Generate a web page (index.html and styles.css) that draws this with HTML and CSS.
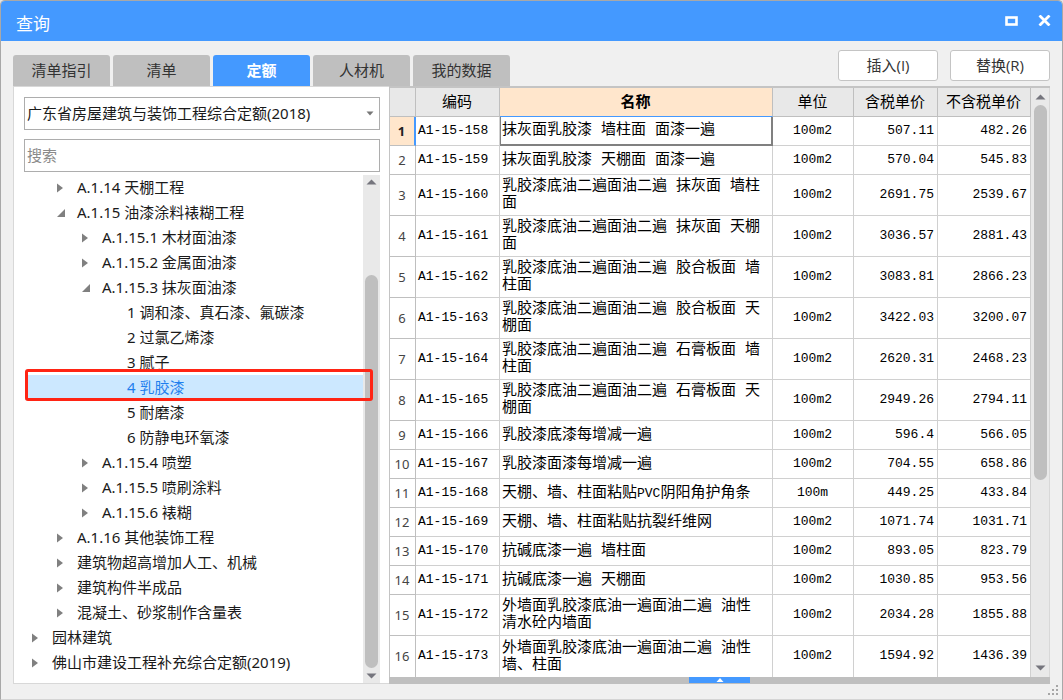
FILE: index.html
```html
<!DOCTYPE html>
<html lang="zh-CN">
<head>
<meta charset="utf-8">
<meta name="viewport" content="width=device-width, initial-scale=1">
<title>查询</title>
<link rel="stylesheet" href="styles.css">
</head>
<body>
<div class="window">
  <header class="titlebar">
    <h1 class="title">查询</h1>
    <div class="win-buttons">
      <button class="win-btn" type="button" aria-label="最大化"><svg width="13" height="10" viewBox="0 0 13 10"><rect x="1.5" y="1.5" width="10" height="7" fill="none" stroke="#fff" stroke-width="2.6"/></svg></button>
      <button class="win-btn" type="button" aria-label="关闭"><svg width="13" height="11" viewBox="0 0 13 11"><path d="M1.5 0.5L11.5 10.5M11.5 0.5L1.5 10.5" stroke="#fff" stroke-width="2.8"/></svg></button>
    </div>
  </header>

  <div class="toolbar">
    <nav class="tabs">
      <button class="tab" type="button">清单指引</button>
      <button class="tab" type="button">清单</button>
      <button class="tab tab-active" type="button">定额</button>
      <button class="tab" type="button">人材机</button>
      <button class="tab" type="button">我的数据</button>
    </nav>
    <div class="actions">
      <button class="action" type="button">插入(I)</button>
      <button class="action" type="button">替换(R)</button>
    </div>
  </div>

  <main class="content">
    <section class="side">
      <div class="combo">
        <select class="field" aria-label="定额库"><option>广东省房屋建筑与装饰工程综合定额(2018)</option></select>
        <svg class="combo-arrow" width="8" height="5" viewBox="0 0 8 5"><path d="M0.5 0.5h7L4 4.5z" fill="#777"/></svg>
      </div>
      <input class="field search" type="text" placeholder="搜索" aria-label="搜索">
      <div class="tree-wrap">
        <ul class="tree">
          <li class="node level-2"><svg class="arrow" viewBox="0 0 10 10"><path d="M2 0.5v9L8 5z"/></svg><button type="button">A.1.14 天棚工程</button></li>
          <li class="node level-2"><svg class="arrow" viewBox="0 0 10 10"><path d="M10 1v8H2z"/></svg><button type="button">A.1.15 油漆涂料裱糊工程</button></li>
          <li class="node level-3"><svg class="arrow" viewBox="0 0 10 10"><path d="M2 0.5v9L8 5z"/></svg><button type="button">A.1.15.1 木材面油漆</button></li>
          <li class="node level-3"><svg class="arrow" viewBox="0 0 10 10"><path d="M2 0.5v9L8 5z"/></svg><button type="button">A.1.15.2 金属面油漆</button></li>
          <li class="node level-3"><svg class="arrow" viewBox="0 0 10 10"><path d="M10 1v8H2z"/></svg><button type="button">A.1.15.3 抹灰面油漆</button></li>
          <li class="node level-4"><button type="button">1 调和漆、真石漆、氟碳漆</button></li>
          <li class="node level-4"><button type="button">2 过氯乙烯漆</button></li>
          <li class="node level-4"><button type="button">3 腻子</button></li>
          <li class="node level-4 selected"><button type="button">4 乳胶漆</button><span class="highlight"></span></li>
          <li class="node level-4"><button type="button">5 耐磨漆</button></li>
          <li class="node level-4"><button type="button">6 防静电环氧漆</button></li>
          <li class="node level-3"><svg class="arrow" viewBox="0 0 10 10"><path d="M2 0.5v9L8 5z"/></svg><button type="button">A.1.15.4 喷塑</button></li>
          <li class="node level-3"><svg class="arrow" viewBox="0 0 10 10"><path d="M2 0.5v9L8 5z"/></svg><button type="button">A.1.15.5 喷刷涂料</button></li>
          <li class="node level-3"><svg class="arrow" viewBox="0 0 10 10"><path d="M2 0.5v9L8 5z"/></svg><button type="button">A.1.15.6 裱糊</button></li>
          <li class="node level-2"><svg class="arrow" viewBox="0 0 10 10"><path d="M2 0.5v9L8 5z"/></svg><button type="button">A.1.16 其他装饰工程</button></li>
          <li class="node level-2"><svg class="arrow" viewBox="0 0 10 10"><path d="M2 0.5v9L8 5z"/></svg><button type="button">建筑物超高增加人工、机械</button></li>
          <li class="node level-2"><svg class="arrow" viewBox="0 0 10 10"><path d="M2 0.5v9L8 5z"/></svg><button type="button">建筑构件半成品</button></li>
          <li class="node level-2"><svg class="arrow" viewBox="0 0 10 10"><path d="M2 0.5v9L8 5z"/></svg><button type="button">混凝土、砂浆制作含量表</button></li>
          <li class="node level-1"><svg class="arrow" viewBox="0 0 10 10"><path d="M2 0.5v9L8 5z"/></svg><button type="button">园林建筑</button></li>
          <li class="node level-1"><svg class="arrow" viewBox="0 0 10 10"><path d="M2 0.5v9L8 5z"/></svg><button type="button">佛山市建设工程补充综合定额(2019)</button></li>
        </ul>
        <div class="scrollbar tree-scroll">
          <svg width="11" height="6" viewBox="0 0 11 6"><path d="M0.5 5.5h10L5.5 0.5z" fill="#75757d"/></svg>
          <div class="track"><div class="thumb"></div></div>
          <svg width="11" height="6" viewBox="0 0 11 6"><path d="M0.5 0.5h10L5.5 5.5z" fill="#75757d"/></svg>
        </div>
      </div>
    </section>

    <section class="grid-panel">
      <div class="grid-wrap">
        <div class="grid-view">
          <table class="grid">
            <colgroup><col class="c-num"><col class="c-code"><col class="c-name"><col class="c-unit"><col class="c-price"><col class="c-net"></colgroup>
            <thead>
              <tr><th></th><th>编码</th><th class="current">名称</th><th>单位</th><th>含税单价</th><th>不含税单价</th></tr>
            </thead>
            <tbody>
              <tr class="active"><td>1</td><td>A1-15-158</td><td>抹灰面乳胶漆 墙柱面 面漆一遍</td><td>100m2</td><td>507.11</td><td>482.26</td></tr>
              <tr><td>2</td><td>A1-15-159</td><td>抹灰面乳胶漆 天棚面 面漆一遍</td><td>100m2</td><td>570.04</td><td>545.83</td></tr>
              <tr class="tall"><td>3</td><td>A1-15-160</td><td>乳胶漆底油二遍面油二遍 抹灰面 墙柱<br>面</td><td>100m2</td><td>2691.75</td><td>2539.67</td></tr>
              <tr class="tall"><td>4</td><td>A1-15-161</td><td>乳胶漆底油二遍面油二遍 抹灰面 天棚<br>面</td><td>100m2</td><td>3036.57</td><td>2881.43</td></tr>
              <tr class="tall"><td>5</td><td>A1-15-162</td><td>乳胶漆底油二遍面油二遍 胶合板面 墙<br>柱面</td><td>100m2</td><td>3083.81</td><td>2866.23</td></tr>
              <tr class="tall"><td>6</td><td>A1-15-163</td><td>乳胶漆底油二遍面油二遍 胶合板面 天<br>棚面</td><td>100m2</td><td>3422.03</td><td>3200.07</td></tr>
              <tr class="tall"><td>7</td><td>A1-15-164</td><td>乳胶漆底油二遍面油二遍 石膏板面 墙<br>柱面</td><td>100m2</td><td>2620.31</td><td>2468.23</td></tr>
              <tr class="tall"><td>8</td><td>A1-15-165</td><td>乳胶漆底油二遍面油二遍 石膏板面 天<br>棚面</td><td>100m2</td><td>2949.26</td><td>2794.11</td></tr>
              <tr><td>9</td><td>A1-15-166</td><td>乳胶漆底漆每增减一遍</td><td>100m2</td><td>596.4</td><td>566.05</td></tr>
              <tr><td>10</td><td>A1-15-167</td><td>乳胶漆面漆每增减一遍</td><td>100m2</td><td>704.55</td><td>658.86</td></tr>
              <tr><td>11</td><td>A1-15-168</td><td>天棚、墙、柱面粘贴<span class="latin">PVC</span>阴阳角护角条</td><td>100m</td><td>449.25</td><td>433.84</td></tr>
              <tr><td>12</td><td>A1-15-169</td><td>天棚、墙、柱面粘贴抗裂纤维网</td><td>100m2</td><td>1071.74</td><td>1031.71</td></tr>
              <tr><td>13</td><td>A1-15-170</td><td>抗碱底漆一遍 墙柱面</td><td>100m2</td><td>893.05</td><td>823.79</td></tr>
              <tr><td>14</td><td>A1-15-171</td><td>抗碱底漆一遍 天棚面</td><td>100m2</td><td>1030.85</td><td>953.56</td></tr>
              <tr class="tall"><td>15</td><td>A1-15-172</td><td>外墙面乳胶漆底油一遍面油二遍 油性<br>清水砼内墙面</td><td>100m2</td><td>2034.28</td><td>1855.88</td></tr>
              <tr class="tall"><td>16</td><td>A1-15-173</td><td>外墙面乳胶漆底油一遍面油二遍 油性<br>墙、柱面</td><td>100m2</td><td>1594.92</td><td>1436.39</td></tr>
            </tbody>
          </table>
        </div>
        <div class="scrollbar grid-scroll">
          <svg width="11" height="6" viewBox="0 0 11 6"><path d="M0.5 5.5h10L5.5 0.5z" fill="#75757d"/></svg>
          <div class="track"><div class="thumb"></div></div>
          <svg width="11" height="6" viewBox="0 0 11 6"><path d="M0.5 0.5h10L5.5 5.5z" fill="#75757d"/></svg>
        </div>
      </div>
      <div class="splitter">
        <button class="expand" type="button" aria-label="展开"><svg width="8" height="4" viewBox="0 0 8 4"><path d="M0.5 4h7L4 0z" fill="#fff"/></svg></button>
      </div>
    </section>
  </main>

  <footer class="foot">
    <svg width="11" height="11" viewBox="0 0 11 11" fill="#a6a6a6"><path d="M8 0h2v2H8zM4 4h2v2H4zM8 4h2v2H8zM0 8h2v2H0zM4 8h2v2H4zM8 8h2v2H8z"/></svg>
  </footer>
</div>
</body>
</html>
```
FILE: styles.css
```css
* {
  box-sizing: border-box;
}

body {
  margin: 0;
  background: #e4e4e4;
  color: #1a1a1a;
  font-family: "Noto Sans", "Noto Sans CJK SC", sans-serif;
  font-size: 15px;
  line-height: 20px;
}

button,
input,
select {
  font: inherit;
  color: inherit;
}

button {
  padding: 0;
  border: 0;
  background: none;
}

svg {
  display: block;
  flex: none;
}

.window {
  display: flex;
  flex-direction: column;
  min-height: 100vh;
  border: 1px solid #a8a8a8;
  border-bottom-color: #d4d4d4;
  border-radius: 5px 5px 0 0;
  background: #f0f0f0;
}

.titlebar {
  display: flex;
  align-items: center;
  justify-content: space-between;
  height: 40px;
  padding: 6px 11px 0 15px;
  border-radius: 4px 4px 0 0;
  background: #4499ff;
  color: #fff;
}

.title {
  margin: 0;
  font-size: 17px;
  font-weight: 400;
}

.win-buttons {
  display: flex;
  align-items: center;
  gap: 20px;
  padding-bottom: 7px;
}

.toolbar {
  display: flex;
  justify-content: space-between;
  padding: 9px 12px 0;
}

.tabs {
  display: flex;
  gap: 3px;
  padding-top: 5px;
}

.tab {
  width: 97px;
  height: 31px;
  padding-bottom: 2px;
  border-radius: 3px 3px 0 0;
  background: #bfbfbf;
  color: #333;
}

.tab-active {
  background: #4499ff;
  color: #fff;
  font-weight: 700;
}

.actions {
  display: flex;
  gap: 12px;
}

.action {
  width: 100px;
  height: 31px;
  padding-bottom: 2px;
  border: 1px solid #c4c4c4;
  border-radius: 3px;
  background: #fff;
  color: #333;
  font-family: "Open Sans", "Noto Sans CJK SC", sans-serif;
}

.content {
  display: flex;
  flex: 1;
  margin: 0 12px;
}

.side {
  display: flex;
  flex-direction: column;
  flex: none;
  width: 376px;
  padding: 10px 9px 0 10px;
  border: 1px solid #d8d8d8;
  border-right: 0;
  background: #fff;
}

.combo {
  position: relative;
  margin-bottom: 9px;
}

.field {
  display: block;
  width: 100%;
  height: 33px;
  padding: 0 2px 1px;
  border: 1px solid #adadad;
  border-radius: 0;
  outline: 0;
  background: #fff;
  appearance: none;
}

.combo-arrow {
  position: absolute;
  top: 14px;
  right: 6px;
}

.search {
  padding-bottom: 2px;
}

.search::placeholder {
  color: #8a8a8a;
  opacity: 1;
}

.tree-wrap {
  display: flex;
  flex: 1;
  margin-top: 3px;
}

.tree {
  flex: 1;
  margin: 0;
  padding: 0 0 0 1px;
  list-style: none;
}

.node {
  display: flex;
  align-items: center;
  gap: 12px;
  height: 25px;
}

.node button {
  padding-bottom: 2px;
  text-align: left;
}

.arrow {
  width: 10px;
  height: 10px;
  fill: #808080;
}

.level-1 { padding-left: 5px; }
.level-2 { padding-left: 30px; }
.level-3 { padding-left: 55px; }
.level-4 { padding-left: 102px; }

.selected {
  position: relative;
  background: #cce8ff;
  color: #1f7fee;
}

.highlight {
  position: absolute;
  top: -6px;
  right: -10px;
  bottom: -1px;
  left: 0;
  z-index: 1;
  border: 3px solid #ff2414;
  border-radius: 3px;
  pointer-events: none;
}

.scrollbar {
  display: flex;
  flex: none;
  flex-direction: column;
  align-items: center;
  padding: 4px 0;
  background: #e9e9e9;
}

.track {
  flex: 1;
  width: 13px;
}

.thumb {
  border-radius: 7px;
  background: #bfbfbf;
}

.tree-scroll { width: 17px; }
.tree-scroll .track { padding: 90px 0 5px; }
.tree-scroll .thumb { height: 100%; }

.grid-panel {
  display: flex;
  flex: 1;
  flex-direction: column;
  min-width: 0;
  border-top: 2px solid #c4c4c4;
}

.grid-wrap {
  display: flex;
  flex: 1;
}

.grid-view {
  flex: 1;
  min-width: 0;
  border-left: 1px solid #c4c4c4;
  background: #fff;
}

.grid {
  width: 100%;
  table-layout: fixed;
  border-collapse: separate;
  border-spacing: 0;
  color: #000;
}

.c-num { width: 26px; }
.c-code { width: 84px; }
.c-unit { width: 81px; }
.c-price { width: 84px; }
.c-net { width: 93px; }

.grid th,
.grid td {
  height: 29px;
  padding: 0 4px 2px 2px;
  overflow: hidden;
  border-right: 1px solid #d0d0d0;
  border-bottom: 1px solid #d0d0d0;
  line-height: 17px;
  white-space: nowrap;
}

.grid th {
  padding: 0 1px 1px 0;
  border-color: #bfbfbf;
  background: #e8e8e8;
  font-weight: 400;
}

.grid .current {
  border-bottom-color: #4499ff;
  background: #ffe6cc;
  font-weight: 700;
}

.grid td {
  font-family: "Liberation Mono", "Noto Sans CJK SC", monospace;
  font-size: 13px;
}

.grid .tall td {
  height: 41px;
}

.grid td:nth-child(1) {
  padding: 0 1px 0 0;
  border-color: #bfbfbf;
  color: #444;
  font-family: "Noto Sans", sans-serif;
  text-align: center;
}

.grid td:nth-child(3) {
  padding-bottom: 0;
  font-size: 15px;
}

.grid td:nth-child(4) {
  padding: 0 1px 2px 0;
  text-align: center;
}

.grid td:nth-child(5),
.grid td:nth-child(6) {
  padding-right: 3px;
  text-align: right;
}

.grid tr:last-child td {
  border-bottom: 0;
}

.grid .active td:nth-child(1) {
  border-right: 2px solid #4499ff;
  background: #ffe6cc;
  color: #222;
  font-weight: 700;
}

.grid .active td:nth-child(3) {
  padding-left: 1px;
  border: 1px solid #808080;
  border-top: 0;
  border-right-width: 2px;
  border-bottom-width: 2px;
}

.latin {
  font-size: 13px;
}

.grid-scroll {
  width: 19px;
  padding: 6px 0;
  border-right: 1px solid #d8d8d8;
}

.grid-scroll .track { padding-top: 5px; }
.grid-scroll .thumb { height: 67%; }

.splitter {
  display: flex;
  justify-content: center;
  height: 7px;
  background: #bfbfbf;
}

.expand {
  display: flex;
  align-items: center;
  justify-content: center;
  width: 61px;
  height: 6px;
  background: #4499ff;
}

.foot {
  display: flex;
  justify-content: flex-end;
  height: 15px;
  padding: 1px 3px 0;
}
```
